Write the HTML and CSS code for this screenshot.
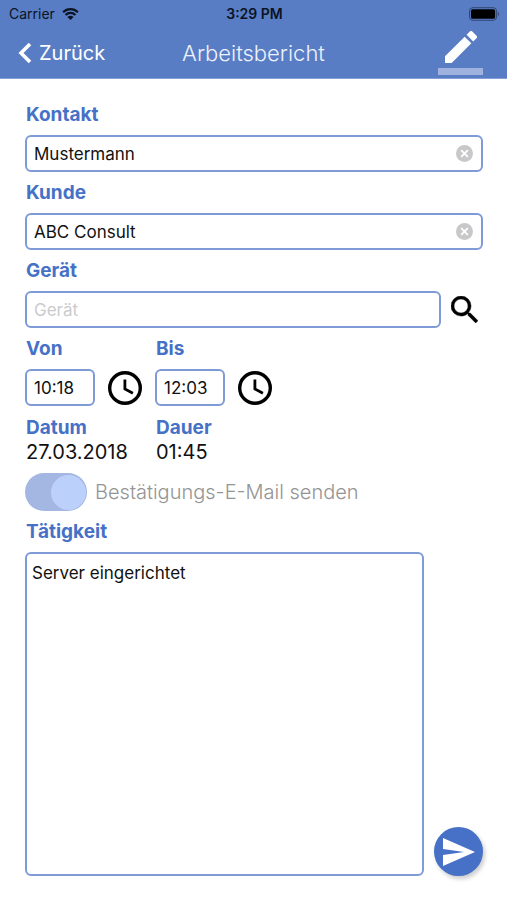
FILE: index.html
```html
<!DOCTYPE html>
<html lang="de">
<head>
<meta charset="utf-8">
<meta name="viewport" content="width=device-width, initial-scale=1">
<title>Arbeitsbericht</title>
<link rel="stylesheet" href="styles.css">
</head>
<body>
<header class="header">
  <div class="status">
    <span class="carrier">Carrier
      <svg class="wifi" viewBox="0 0 18 13" aria-hidden="true"><path d="M1 4.600a11.400 11.400 0 0 1 16 0M3.700 7.500a7.500 7.500 0 0 1 10.600 0" fill="none" stroke="currentColor" stroke-width="2.400"/><path d="M9 13 5.700 9.700a4.700 4.700 0 0 1 6.600 0z" fill="currentColor"/></svg>
    </span>
    <span class="time">3:29 PM</span>
    <svg class="battery" viewBox="0 0 32 14" aria-hidden="true"><rect x=".5" y=".5" width="28" height="13" rx="3.500" fill="none" stroke="#2f4470"/><rect x="2" y="2" width="25" height="10" rx="2" fill="#000"/><path d="M30 4.500q2 2.500 0 5z" fill="#2f4470"/></svg>
  </div>
  <nav class="nav">
    <a class="back" href="#"><svg viewBox="0 0 14 22" aria-hidden="true"><path d="M12 2 3 11l9 9" fill="none" stroke="currentColor" stroke-width="3.600"/></svg>Zurück</a>
    <h1 class="title">Arbeitsbericht</h1>
    <button class="edit" type="button" aria-label="Bearbeiten"><svg viewBox="3 3 18 18" aria-hidden="true"><path fill="currentColor" d="M3 17.250V21h3.750L17.810 9.940l-3.750-3.750L3 17.250zM20.710 7.040a1 1 0 0 0 0-1.410l-2.340-2.340a1 1 0 0 0-1.410 0l-1.830 1.830 3.750 3.750 1.830-1.830z"/></svg></button>
  </nav>
</header>
<main class="form">
  <label class="label" for="kontakt">Kontakt</label>
  <div class="field">
    <input id="kontakt" type="text" value="Mustermann">
    <button class="clear" type="button" aria-label="Kontakt löschen"><svg viewBox="0 0 18 18" aria-hidden="true"><circle cx="9" cy="9" r="9" fill="#c8c8ca"/><path d="m5.500 5.500 7 7m0-7-7 7" stroke="#fff" stroke-width="2"/></svg></button>
  </div>
  <label class="label" for="kunde">Kunde</label>
  <div class="field">
    <input id="kunde" type="text" value="ABC Consult">
    <button class="clear" type="button" aria-label="Kunde löschen"><svg viewBox="0 0 18 18" aria-hidden="true"><circle cx="9" cy="9" r="9" fill="#c8c8ca"/><path d="m5.500 5.500 7 7m0-7-7 7" stroke="#fff" stroke-width="2"/></svg></button>
  </div>
  <label class="label" for="geraet">Gerät</label>
  <div class="row search-row">
    <div class="field"><input id="geraet" type="text" placeholder="Gerät"></div>
    <button class="search" type="button" aria-label="Gerät suchen"><svg viewBox="3 3 17.500 17.500" aria-hidden="true"><path fill="currentColor" stroke="currentColor" stroke-width=".3" d="M15.500 14h-.79l-.28-.27A6.471 6.471 0 0 0 16 9.500 6.500 6.500 0 1 0 9.500 16c1.610 0 3.090-.59 4.230-1.570l.27.28v.79l5 4.990L20.490 19l-4.990-5zm-6 0C7.010 14 5 11.990 5 9.500S7.010 5 9.500 5 14 7.010 14 9.500 11.990 14 9.500 14z"/></svg></button>
  </div>
  <div class="times">
    <div>
      <label class="label" for="von">Von</label>
      <div class="row time-row">
        <div class="field"><input id="von" type="text" value="10:18"></div>
        <button class="clock" type="button" aria-label="Beginn wählen"><svg viewBox="0 0 34 34" aria-hidden="true"><circle cx="17" cy="17" r="15.300" fill="none" stroke="currentColor" stroke-width="3.400"/><path d="M16.900 8.500v9.500l8 4.300" fill="none" stroke="currentColor" stroke-width="2.800"/></svg></button>
      </div>
    </div>
    <div>
      <label class="label" for="bis">Bis</label>
      <div class="row time-row">
        <div class="field"><input id="bis" type="text" value="12:03"></div>
        <button class="clock" type="button" aria-label="Ende wählen"><svg viewBox="0 0 34 34" aria-hidden="true"><circle cx="17" cy="17" r="15.300" fill="none" stroke="currentColor" stroke-width="3.400"/><path d="M16.900 8.500v9.500l8 4.300" fill="none" stroke="currentColor" stroke-width="2.800"/></svg></button>
      </div>
    </div>
  </div>
  <dl class="times facts">
    <div><dt>Datum</dt><dd>27.03.2018</dd></div>
    <div><dt>Dauer</dt><dd>01:45</dd></div>
  </dl>
  <div class="confirm">
    <input class="switch" id="mail" type="checkbox" checked disabled>
    <label for="mail">Bestätigungs-E-Mail senden</label>
  </div>
  <label class="label" for="taetigkeit">Tätigkeit</label>
  <div class="row report">
    <textarea id="taetigkeit">Server eingerichtet</textarea>
    <button class="send" type="button" aria-label="Senden"><svg viewBox="0 0 32 28" aria-hidden="true"><path fill="currentColor" d="M0 0 32 14 0 28V17l21-3L0 11z"/></svg></button>
  </div>
</main>
</body>
</html>
```
FILE: styles.css
```css
* { box-sizing: border-box; }

body {
  margin: 0;
  min-height: 100vh;
  display: flex;
  flex-direction: column;
  background: #fff;
  color: #111;
  font-family: Inter, "Liberation Sans", sans-serif;
}

button { border: 0; padding: 0; background: none; color: #000; flex: none; }
svg { display: block; }
input, textarea { font: inherit; color: inherit; }

.header { background: #587dc4; border-bottom: 1px solid #84a0d6; }

.status {
  display: grid;
  grid-template-columns: 1fr auto 1fr;
  align-items: center;
  height: 27px;
  padding: 0 7px 0 9px;
  color: #0b1324;
  font-size: 14px;
}
.carrier { display: flex; align-items: center; gap: 7px; }
.wifi { width: 17px; height: 12px; }
.time { font-weight: 600; }
.battery { width: 31px; height: 14px; justify-self: end; }

.nav {
  display: grid;
  grid-template-columns: 1fr auto 1fr;
  align-items: center;
  height: 51px;
  padding: 0 24px 0 18px;
}
.back {
  display: flex;
  align-items: center;
  gap: 7px;
  color: #fff;
  font-size: 20px;
  text-decoration: none;
}
.back svg { width: 14px; height: 22px; }
.title { margin: 0; padding-left: 6px; color: #edf2fc; font-size: 22px; font-weight: 300; }
.edit {
  justify-self: end;
  width: 45px;
  height: 44px;
  border-bottom: 7px solid #9fb3de;
  color: #fff;
}
.edit svg { width: 32px; height: 32px; margin: 0 auto 5px; }

.form {
  flex: 1;
  display: flex;
  flex-direction: column;
  padding: 15px 24px 24px 25px;
}
.label, dt {
  display: block;
  padding-left: 1px;
  color: #4671c6;
  font-size: 19px;
  font-weight: 700;
  line-height: 41px;
}
.field {
  display: flex;
  align-items: center;
  flex: 1;
  min-width: 0;
  height: 37px;
  border: 2px solid #7e9bd8;
  border-radius: 6px;
  background: #fff;
}
.form > .field { flex: none; }
.field input {
  flex: 1;
  min-width: 0;
  height: 100%;
  padding: 0 7px;
  border: 0;
  outline: 0;
  background: none;
  font-size: 17px;
}
.field input::placeholder { color: #cbcbcf; opacity: 1; }
.clear { margin-right: 8px; }
.clear svg { width: 17px; height: 17px; }

.row { display: flex; align-items: center; }
.search-row { gap: 10px; padding-right: 5px; }
.search svg { width: 27px; height: 27px; }

.times { display: grid; grid-template-columns: 130px 130px; margin: 0; }
.time-row { gap: 13px; padding-right: 13px; }
.clock svg { width: 34px; height: 34px; }
.facts { margin-top: 10px; }
.facts dt { line-height: 24px; }
.facts dd { margin: 0; padding-left: 1px; font-size: 20px; line-height: 24px; }

.confirm {
  display: flex;
  align-items: center;
  gap: 8px;
  margin-top: 9px;
  color: #949494;
  font-size: 20px;
  font-weight: 300;
}
.switch {
  appearance: none;
  display: flex;
  justify-content: flex-end;
  align-items: center;
  width: 62px;
  height: 38px;
  margin: 0;
  padding-right: 1px;
  border-radius: 19px;
  background: #a3b7e2;
}
.switch::before {
  content: "";
  width: 35px;
  height: 35px;
  border-radius: 50%;
  background: #bbd0fb;
}

.report { flex: 1; align-items: stretch; gap: 10px; }
textarea {
  flex: 1;
  min-width: 0;
  padding: 9px 5px;
  border: 2px solid #7e9bd8;
  border-radius: 6px;
  outline: 0;
  resize: none;
  font-size: 17px;
  line-height: 20px;
}
.send {
  align-self: flex-end;
  display: flex;
  align-items: center;
  justify-content: center;
  width: 49px;
  height: 49px;
  border-radius: 50%;
  background: #4671c6;
  box-shadow: 2px 3px 4px #0003;
  color: #fff;
}
.send svg { width: 32px; height: 28px; }
```
